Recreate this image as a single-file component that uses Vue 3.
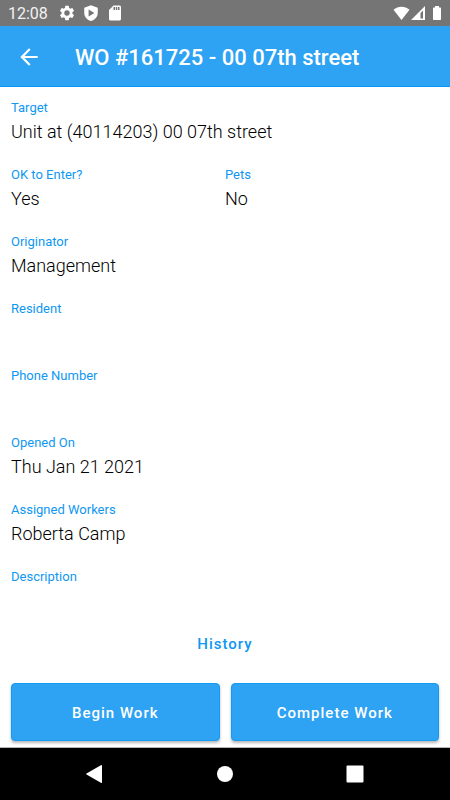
<script setup>
const rows = [
  [{ label: 'Target', value: 'Unit at (40114203) 00 07th street' }],
  [
    { label: 'OK to Enter?', value: 'Yes' },
    { label: 'Pets', value: 'No' },
  ],
  [{ label: 'Originator', value: 'Management' }],
  [{ label: 'Resident', value: '' }],
  [{ label: 'Phone Number', value: '' }],
  [{ label: 'Opened On', value: 'Thu Jan 21 2021' }],
  [{ label: 'Assigned Workers', value: 'Roberta Camp' }],
  [{ label: 'Description', value: '' }],
]
</script>

<template>
  <div class="screen">
    <div class="status">
      <time class="clock">12:08</time>
      <div class="status-left">
        <svg width="18" height="18" viewBox="0 0 24 24" aria-hidden="true">
          <path fill="#fff" d="M19.14 12.94c.04-.3.06-.61.06-.94 0-.32-.02-.64-.07-.94l2.03-1.58c.18-.14.23-.41.12-.61l-1.92-3.32c-.12-.22-.37-.29-.59-.22l-2.39.96c-.5-.38-1.03-.7-1.62-.94l-.36-2.54c-.04-.24-.24-.41-.48-.41h-3.84c-.24 0-.43.17-.47.41l-.36 2.54c-.59.24-1.13.57-1.62.94l-2.39-.96c-.22-.08-.47 0-.59.22L2.74 8.87c-.12.21-.08.47.12.61l2.03 1.58c-.05.3-.09.63-.09.94s.02.64.07.94l-2.03 1.58c-.18.14-.23.41-.12.61l1.92 3.32c.12.22.37.29.59.22l2.39-.96c.5.38 1.03.7 1.62.94l.36 2.54c.05.24.24.41.48.41h3.84c.24 0 .44-.17.47-.41l.36-2.54c.59-.24 1.13-.56 1.62-.94l2.39.96c.22.08.47 0 .59-.22l1.92-3.32c.12-.22.07-.47-.12-.61l-2.01-1.58zM12 15.6A3.6 3.6 0 1 1 12 8.4a3.6 3.6 0 0 1 0 7.2z" />
        </svg>
        <svg width="18" height="18" viewBox="0 0 24 24" aria-hidden="true">
          <path fill="#fff" fill-rule="evenodd" d="M12 1.500L3 5v7c0 5 3.800 9.400 9 10.800 5.200-1.400 9-5.800 9-10.800V5zM8.800 7.300l7.700 4.700-7.700 4.700z" />
        </svg>
        <svg width="18" height="18" viewBox="0 0 24 24" aria-hidden="true">
          <path fill="#fff" d="M18 2h-8L4 8v12c0 1.100.9 2 2 2h12c1.100 0 2-.9 2-2V4c0-1.100-.9-2-2-2zm-6 6h-2V4h2v4zm3 0h-2V4h2v4zm3 0h-2V4h2v4z" />
        </svg>
      </div>
      <div class="status-right">
        <svg width="17" height="16" viewBox="0 0 17 16" aria-hidden="true">
          <path fill="#fff" d="M8.500 15L.5 4.800C2.800 2.800 5.500 1.800 8.500 1.800s5.700 1 8 3z" />
        </svg>
        <svg width="16" height="16" viewBox="0 0 16 16" aria-hidden="true">
          <path fill="#fff" fill-rule="evenodd" d="M1 15L15 1v14zM10.500 8.100V13.500h2.500V5.500z" />
        </svg>
        <svg class="battery" width="10" height="16" viewBox="0 0 10 16" aria-hidden="true">
          <path fill="#fff" d="M3 1h4v1.500h1.500l.5.5v11.500l-.5.500h-7l-.5-.5V3l.5-.5H3z" />
        </svg>
      </div>
    </div>

    <header class="bar">
      <button class="back" type="button" aria-label="Back">
        <svg width="26" height="26" viewBox="0 0 24 24" aria-hidden="true">
          <path fill="#fff" d="M20 11H7.830l5.590-5.590L12 4l-8 8 8 8 1.410-1.410L7.830 13H20v-2z" />
        </svg>
      </button>
      <h1 class="title">WO #161725 - 00 07th street</h1>
    </header>

    <main class="content">
      <dl class="details">
        <div v-for="(row, i) in rows" :key="i" class="row">
          <div v-for="field in row" :key="field.label" class="field">
            <dt class="label">{{ field.label }}</dt>
            <dd class="value">{{ field.value }}</dd>
          </div>
        </div>
      </dl>
      <button class="history" type="button">History</button>
      <div class="actions">
        <button class="action" type="button">Begin Work</button>
        <button class="action" type="button">Complete Work</button>
      </div>
    </main>

    <nav class="system">
      <button class="key" type="button" aria-label="System back">
        <svg width="20" height="20" viewBox="0 0 20 20" aria-hidden="true">
          <path fill="#fff" d="M17 1.500v17q0 .6-.7.400L1.500 10.500q-.7-.5 0-1L16.300 1.100q.7-.2.700.4z" />
        </svg>
      </button>
      <button class="key" type="button" aria-label="Home">
        <svg width="20" height="20" viewBox="0 0 20 20" aria-hidden="true">
          <circle fill="#fff" cx="10" cy="10" r="8" />
        </svg>
      </button>
      <button class="key" type="button" aria-label="Recent apps">
        <svg width="20" height="20" viewBox="0 0 20 20" aria-hidden="true">
          <rect fill="#fff" x="1.500" y="1.500" width="17" height="17" rx="1" />
        </svg>
      </button>
    </nav>
  </div>
</template>

<style>
body {
  background: #fff;
}
</style>

<style scoped>
.screen {
  min-height: 100vh;
  display: flex;
  flex-direction: column;
  background: #fff;
  color: #000;
  font-family: Roboto, "Liberation Sans", sans-serif;
}

button {
  margin: 0;
  padding: 0;
  border: 0;
  background: none;
  font: inherit;
  cursor: pointer;
}

svg {
  display: block;
}

.status {
  display: flex;
  align-items: center;
  height: 26px;
  padding: 0 8px;
  background: #757575;
}

.clock {
  padding-top: 2px;
  color: #f2f2f2;
  font-size: 16px;
  line-height: 24px;
}

.status-left {
  display: flex;
  gap: 6px;
  margin-left: 10px;
}

.status-right {
  display: flex;
  align-items: center;
  margin-left: auto;
}

.battery {
  margin-left: 6px;
}

.bar {
  box-sizing: border-box;
  display: flex;
  align-items: center;
  gap: 33px;
  height: 61px;
  padding: 2px 16px 0;
  border-bottom: 1px solid #0a98f4;
  background: #2ea2f3;
}

.title {
  margin: 0;
  padding-top: 2px;
  color: #fff;
  font-size: 22px;
  font-weight: 500;
  line-height: 28px;
}

.content {
  flex: 1;
  display: flex;
  flex-direction: column;
  padding: 13px 11px 6px;
}

.details {
  display: grid;
  gap: 23px;
  margin: 0;
}

.row {
  display: flex;
}

.field {
  flex: 1;
}

.label {
  color: #0f97f2;
  font-size: 13px;
  line-height: 16px;
}

.value {
  min-height: 24px;
  margin: 4px 0 0;
  font-size: 18px;
  font-weight: 300;
  line-height: 24px;
}

.history {
  align-self: center;
  margin-top: auto;
  padding: 8px;
  color: #0f97f2;
  font-size: 15px;
  font-weight: 500;
  line-height: 24px;
  letter-spacing: 1px;
}

.actions {
  display: flex;
  gap: 11px;
  margin-top: 19px;
}

.action {
  flex: 1;
  height: 58px;
  padding-top: 2px;
  border: 1px solid #149af2;
  border-radius: 4px;
  background: #2ea2f3;
  box-shadow: 0 2px 3px rgba(0, 0, 0, 0.28);
  color: #fff;
  font-size: 15px;
  font-weight: 500;
  letter-spacing: 1px;
}

.system {
  display: flex;
  justify-content: center;
  align-items: center;
  gap: 110px;
  height: 52px;
  border-top: 1px solid #b5b5b5;
  background: #000;
}

.key {
  display: block;
}
</style>
